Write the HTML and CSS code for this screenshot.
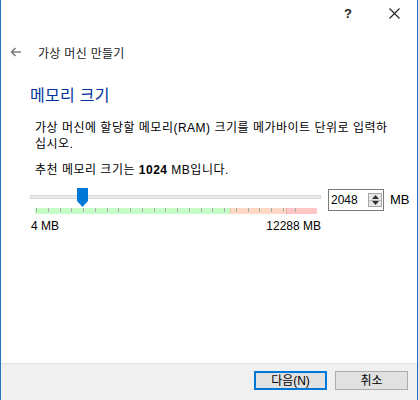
FILE: index.html
```html
<!DOCTYPE html>
<html lang="ko">
<head>
  <meta charset="UTF-8">
  <title>가상 머신 만들기</title>
  <link rel="stylesheet" href="styles.css">
</head>
<body>

<div class="dialog">
  <!-- Titelleiste -->
  <div class="titlebar">
    <span class="tb-btn">?</span>
    <span class="tb-btn">
      <svg width="11" height="11" viewBox="0 0 11 11"><path d="M0.5 0.5 L10.5 10.5 M10.5 0.5 L0.5 10.5" stroke="#222" stroke-width="1.1" fill="none"/></svg>
    </span>
  </div>

  <div class="header">
    <svg class="back" width="12" height="12" viewBox="0 0 12 12"><path d="M11 6 H1.5 M5.5 2 L1.5 6 L5.5 10" stroke="#7f7f7f" stroke-width="1.7" fill="none"/></svg>
    <span class="header-title">가상 머신 만들기</span>
  </div>

  <div class="content">
    <h1 class="heading">메모리 크기</h1>
    <p class="text">가상 머신에 할당할 메모리(RAM) 크기를 메가바이트 단위로 입력하십시오.</p>
    <p class="text rec">추천 메모리 크기는 <b>1024</b> MB입니다.</p>

    <div class="slider-row">
      <div class="slider">
        <div class="track"></div>
        <svg class="thumb" width="11" height="19" viewBox="0 0 11 19"><polygon points="0,0 11,0 11,13 5.5,19 0,13" fill="#0078d7"/></svg>
        <div class="scale"></div>
        <div class="labels">
          <span>4 MB</span>
          <span>12288 MB</span>
        </div>
      </div>
      <div class="spinbox">
        <span class="spin-value">2048</span>
        <div class="spin-btns">
          <div class="spin-btn"><svg width="7" height="4" viewBox="0 0 7 4"><polygon points="0,4 7,4 3.5,0" fill="#333"/></svg></div>
          <div class="spin-btn"><svg width="7" height="4" viewBox="0 0 7 4"><polygon points="0,0 7,0 3.5,4" fill="#333"/></svg></div>
        </div>
      </div>
      <span class="unit">MB</span>
    </div>
  </div>

  <div class="footer">
    <button class="btn btn-default">다음(N)</button>
    <button class="btn">취소</button>
  </div>
</div>

</body>
</html>
```

FILE: styles.css
```css
body {
  margin: 0;
  background-color: #e4e4e4;
  font-family: "Liberation Sans", "Noto Sans CJK KR", sans-serif;
  font-size: 12px;
  color: #000;
}

/* Dialogfenster */
.dialog {
  width: 418px;
  height: 400px;
  box-sizing: border-box;
  border-left: 1px solid #2a74c8;
  border-right: 1px solid #2a74c8;
  background-color: #fff;
  display: flex;
  flex-direction: column;
}

.titlebar {
  height: 26px;
  display: flex;
  justify-content: flex-end;
  align-items: center;
}

.tb-btn {
  width: 46px;
  display: flex;
  justify-content: center;
  align-items: center;
  font-size: 13px;
  font-weight: bold;
  color: #222;
}

.header {
  height: 52px;
  display: flex;
  align-items: center;
  padding-left: 9px;
}

.back {
  margin-right: 16px;
}

.header-title {
  color: #222;
  letter-spacing: 0.3px;
}

/* Inhalt */
.content {
  flex: 1;
  padding-left: 29px;
}

.heading {
  margin: 8px 0 0 0;
  font-size: 16px;
  line-height: 20px;
  font-weight: normal;
  color: #003399;
  letter-spacing: 0.3px;
}

.text {
  width: 358px;
  margin: 14px 0 0 5px;
  line-height: 16px;
  letter-spacing: 0.5px;
}

.rec {
  margin-top: 10px;
}

.slider-row {
  display: flex;
  align-items: flex-start;
  margin-top: 11px;
}

.slider {
  position: relative;
  flex: 0 0 291px;
  padding-top: 6px;
}

.track {
  height: 4px;
  box-sizing: border-box;
  border: 1px solid #d9d9d9;
  background-color: #e9e9e9;
}

/* Schieberegler liegt über der Spur */
.thumb {
  position: absolute;
  left: 47px;
  top: -1px;
}

.scale {
  height: 6px;
  margin: 9px 4px 0 5px;
  background-image:
    repeating-linear-gradient(to right, transparent 0 1px, #a9a9a9 1px 2px, transparent 2px 11.75px),
    linear-gradient(to right, #c6fdc6 0 195px, #f2c0a8 195px 196px, #ffd9c6 196px 251px, #f5aaaa 251px 252px, #ffc6c6 252px);
  background-size: 270px 4px, 100% 100%;
  background-repeat: no-repeat;
}

.labels {
  display: flex;
  justify-content: space-between;
  margin: 4px 0 0 1px;
  line-height: 16px;
}

.spinbox {
  flex: 0 0 56px;
  height: 22px;
  box-sizing: border-box;
  border: 1px solid #7a7a7a;
  margin-left: 7px;
  display: flex;
  align-items: center;
  justify-content: space-between;
  padding: 0 1px 0 2px;
}

.spin-btns {
  width: 14px;
  height: 14px;
  box-sizing: border-box;
  border: 1px solid #a7a7a7;
  background-color: #e8e8e8;
  display: flex;
  flex-direction: column;
}

.spin-btn {
  flex: 1;
  display: flex;
  align-items: center;
  justify-content: center;
}

.spin-btn + .spin-btn {
  border-top: 1px solid #b8b8b8;
}

.unit {
  margin-left: 6px;
  line-height: 22px;
  font-size: 13px;
}

/* Fußleiste */
.footer {
  height: 37px;
  box-sizing: border-box;
  border-top: 1px solid #dfdfdf;
  background-color: #f0f0f0;
  display: flex;
  justify-content: flex-end;
  align-items: flex-start;
  gap: 8px;
  padding: 7px 9px 0 0;
}

.btn {
  width: 73px;
  height: 19px;
  box-sizing: border-box;
  border: 1px solid #adadad;
  background-color: #e1e1e1;
  font-family: inherit;
  font-size: 12px;
  color: #000;
  padding: 0;
  line-height: 16px;
}

.btn-default {
  border: 2px solid #0078d7;
}
```
